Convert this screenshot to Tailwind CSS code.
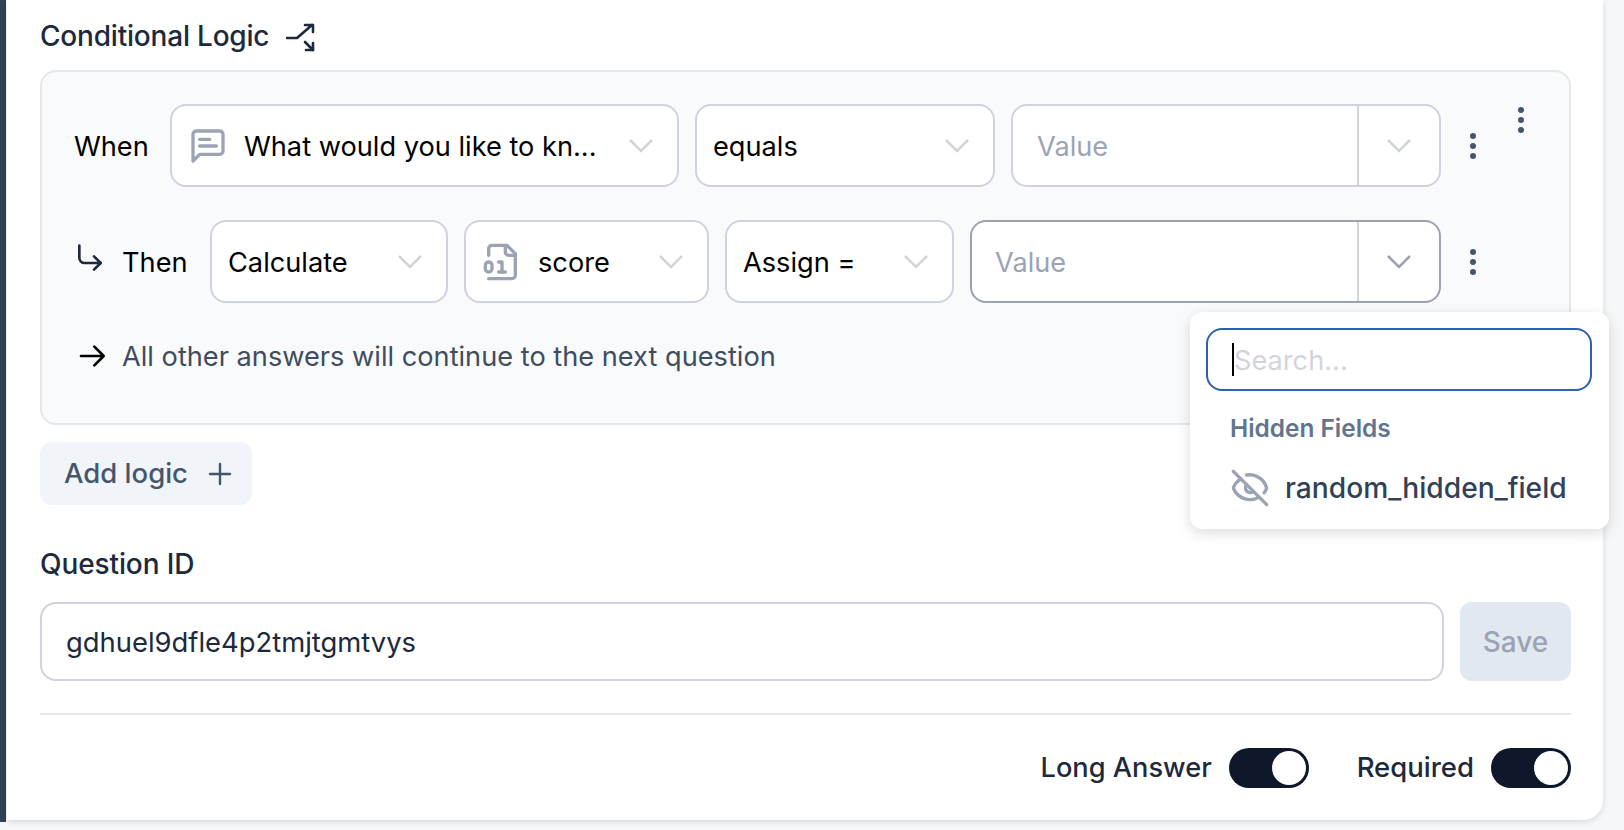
<!DOCTYPE html>
<html lang="en">
<head>
  <meta charset="UTF-8" />
  <title>Conditional Logic</title>
  <script src="https://cdn.jsdelivr.net/npm/@tailwindcss/browser@4"></script>
</head>
<body class="bg-[#e9ebee] font-['Inter',sans-serif] overflow-hidden">
  <div class="relative flex w-[1624px] h-[830px] overflow-hidden bg-[#f6f7f9]">
    <!-- Left accent -->
    <div class="w-[6px] h-[822px] bg-[#334155] shrink-0"></div>

    <!-- Card -->
    <div class="ml-px w-[1596px] h-[820px] bg-white rounded-br-[20px] shadow-[0_2px_6px_rgba(0,0,0,0.12)] pt-4 pl-[33px] pr-[32px]">
      <!-- Heading -->
      <div class="flex items-center h-10 gap-[17px] text-[28px] font-medium text-slate-800 tracking-[-0.2px]">
        <span>Conditional Logic</span>
        <svg class="mt-[4px] w-[30px] h-[30px] text-slate-800" viewBox="0 0 30 30" fill="none" stroke="currentColor" stroke-width="2.6" stroke-linecap="round" stroke-linejoin="round">
          <path d="M1 15h10l15-13" />
          <path d="M19 2h8v7" />
          <path d="M19 19l8 8" />
          <path d="M27 20v7h-7" />
        </svg>
      </div>

      <!-- Logic panel -->
      <div class="relative mt-[14px] h-[355px] bg-slate-50 border-2 border-gray-200 rounded-[16px] pt-[32px] pl-[32px]">
        <!-- When row -->
        <div class="flex items-center h-[83px] text-[27.2px] text-black">
          <span class="w-[96px] shrink-0 pt-[3px]">When</span>
          <div class="w-[509px] h-full flex items-center bg-white border-2 border-[#cfd3df] rounded-[16px] pl-[16px] pr-[24px]">
            <svg class="w-[40px] h-[40px] shrink-0 text-[#9ca3b4]" viewBox="0 0 24 24" fill="none" stroke="currentColor" stroke-width="2" stroke-linecap="round" stroke-linejoin="round">
              <path d="M21 15a2 2 0 0 1-2 2H7l-4 4V5a2 2 0 0 1 2-2h14a2 2 0 0 1 2 2z" />
              <path d="M7 8h6" />
              <path d="M7 12h10" />
            </svg>
            <span class="ml-[16px] flex-1 whitespace-nowrap pt-[3px]">What would you like to kn...</span>
            <svg class="w-[24px] h-[14px] shrink-0 text-[#d1d5db]" viewBox="0 0 24 14" fill="none" stroke="currentColor" stroke-width="2.5"><path d="M1 1l11 11L23 1" /></svg>
          </div>
          <div class="ml-[16px] w-[300px] h-full flex items-center justify-between bg-white border-2 border-[#cfd3df] rounded-[16px] pl-[16px] pr-[24px]">
            <span class="pt-[3px]">equals</span>
            <svg class="w-[24px] h-[14px] text-[#d1d5db]" viewBox="0 0 24 14" fill="none" stroke="currentColor" stroke-width="2.5"><path d="M1 1l11 11L23 1" /></svg>
          </div>
          <div class="ml-[16px] w-[430px] h-full flex items-center bg-white border-2 border-[#cfd3df] rounded-[16px]">
            <span class="flex-1 pl-[24px] pt-[3px] text-[#9ca3b4]">Value</span>
            <div class="w-[82px] h-full flex items-center justify-center border-l-2 border-[#d1d5db]">
              <svg class="w-[24px] h-[14px] text-[#d1d5db]" viewBox="0 0 24 14" fill="none" stroke="currentColor" stroke-width="2.5"><path d="M1 1l11 11L23 1" /></svg>
            </div>
          </div>
          <svg class="ml-[24px] w-[16px] h-[28px] text-slate-600" viewBox="0 0 16 28" fill="currentColor"><circle cx="8" cy="4" r="3" /><circle cx="8" cy="14" r="3" /><circle cx="8" cy="24" r="3" /></svg>
        </div>

        <!-- Then row -->
        <div class="mt-[33px] flex items-center h-[83px] text-[27.2px] text-black">
          <svg class="w-[32px] h-[32px] shrink-0 -mt-[6px] text-slate-800" viewBox="0 0 24 24" fill="none" stroke="currentColor" stroke-width="2" stroke-linecap="round" stroke-linejoin="round">
            <path d="M15 10l5 5-5 5" />
            <path d="M4 2v9a4 4 0 0 0 4 4h12" />
          </svg>
          <span class="ml-[16px] w-[88px] shrink-0 pt-[3px]">Then</span>
          <div class="w-[238px] h-full flex items-center justify-between bg-white border-2 border-[#cfd3df] rounded-[16px] pl-[16px] pr-[24px]">
            <span class="pt-[3px]">Calculate</span>
            <svg class="w-[24px] h-[14px] text-[#d1d5db]" viewBox="0 0 24 14" fill="none" stroke="currentColor" stroke-width="2.5"><path d="M1 1l11 11L23 1" /></svg>
          </div>
          <div class="ml-[16px] w-[245px] h-full flex items-center bg-white border-2 border-[#cfd3df] rounded-[16px] pl-[16px] pr-[24px]">
            <svg class="w-[40px] h-[40px] shrink-0 text-[#9ca3b4]" viewBox="0 0 24 24" fill="none" stroke="currentColor" stroke-width="2" stroke-linecap="round" stroke-linejoin="round">
              <path d="M4 22h14a2 2 0 0 0 2-2V7l-5-5H6a2 2 0 0 0-2 2v4" />
              <path d="M14 2v4a2 2 0 0 0 2 2h4" />
              <rect x="2" y="12" width="4" height="6" rx="2" />
              <path d="M10 12h2v6" />
              <path d="M10 18h4" />
            </svg>
            <span class="ml-[16px] flex-1 pt-[3px]">score</span>
            <svg class="w-[24px] h-[14px] shrink-0 text-[#d1d5db]" viewBox="0 0 24 14" fill="none" stroke="currentColor" stroke-width="2.5"><path d="M1 1l11 11L23 1" /></svg>
          </div>
          <div class="ml-[16px] w-[229px] h-full flex items-center justify-between bg-white border-2 border-[#cfd3df] rounded-[16px] pl-[16px] pr-[24px]">
            <span class="pt-[3px]">Assign =</span>
            <svg class="w-[24px] h-[14px] text-[#d1d5db]" viewBox="0 0 24 14" fill="none" stroke="currentColor" stroke-width="2.5"><path d="M1 1l11 11L23 1" /></svg>
          </div>
          <div class="ml-[16px] w-[471px] h-full flex items-center bg-white border-2 border-[#9ca3af] rounded-[16px]">
            <span class="flex-1 pl-[23px] pt-[3px] text-[#9ca3b4]">Value</span>
            <div class="w-[82px] h-full flex items-center justify-center border-l-2 border-[#d1d5db]">
              <svg class="w-[24px] h-[14px] text-[#9ca3af]" viewBox="0 0 24 14" fill="none" stroke="currentColor" stroke-width="2.5"><path d="M1 1l11 11L23 1" /></svg>
            </div>
          </div>
          <svg class="ml-[24px] w-[16px] h-[28px] text-slate-600" viewBox="0 0 16 28" fill="currentColor"><circle cx="8" cy="4" r="3" /><circle cx="8" cy="14" r="3" /><circle cx="8" cy="24" r="3" /></svg>
        </div>

        <!-- Fallback note -->
        <div class="mt-[31px] flex items-center h-[44px] text-[27.2px] text-[#414c5e]">
          <svg class="ml-[3px] w-[32px] h-[32px] shrink-0 text-black" viewBox="0 0 24 24" fill="none" stroke="currentColor" stroke-width="2" stroke-linecap="round" stroke-linejoin="round">
            <path d="M3 12h16" />
            <path d="M13 5l7 7-7 7" />
          </svg>
          <span class="ml-[13px] pt-[2px]">All other answers will continue to the next question</span>
        </div>

        <!-- Stray menu button -->
        <svg class="absolute left-[1471px] top-[34px] w-[16px] h-[28px] text-slate-600" viewBox="0 0 16 28" fill="currentColor"><circle cx="8" cy="4" r="3" /><circle cx="8" cy="14" r="3" /><circle cx="8" cy="24" r="3" /></svg>
      </div>

      <!-- Add logic -->
      <div class="mt-[17px] w-[212px] h-[63px] flex items-center gap-[20px] pl-[24px] bg-slate-100 rounded-[12px] text-[27.5px] font-medium text-slate-600">
        <span>Add logic</span>
        <svg class="w-[24px] h-[24px]" viewBox="0 0 24 24" fill="none" stroke="currentColor" stroke-width="2.4" stroke-linecap="round"><path d="M12 2v20" /><path d="M2 12h20" /></svg>
      </div>

      <!-- Question ID -->
      <div class="mt-[39px] h-10 flex items-center text-[28px] font-medium text-slate-800 tracking-[-0.1px]">Question ID</div>
      <div class="mt-[18px] flex gap-[16px] h-[79px]">
        <div class="flex-1 flex items-center pl-[24px] bg-white border-2 border-[#cfd3df] rounded-[16px] text-[27.4px] text-slate-800">
          <span class="pt-[2px]">gdhuel9dfle4p2tmjtgmtvys</span>
        </div>
        <div class="w-[111px] flex items-center justify-center bg-slate-200 rounded-[12px] text-[28px] font-medium text-[#9ca3b4]">Save</div>
      </div>

      <div class="mt-[32px] h-[2px] bg-gray-200"></div>

      <!-- Toggles -->
      <div class="mt-[33px] flex items-center justify-end h-10 text-[27.2px] font-medium text-slate-800">
        <span>Long Answer</span>
        <div class="ml-[17px] w-[80px] h-10 flex items-center justify-end pr-[3px] bg-slate-900 rounded-full">
          <div class="w-[34px] h-[34px] bg-white rounded-full"></div>
        </div>
        <span class="ml-[48px] text-[27.5px]">Required</span>
        <div class="ml-[17px] w-[80px] h-10 flex items-center justify-end pr-[3px] bg-slate-900 rounded-full">
          <div class="w-[34px] h-[34px] bg-white rounded-full"></div>
        </div>
      </div>
    </div>

    <!-- Dropdown popup -->
    <div class="absolute left-[1190px] top-[312px] w-[419px] h-[217px] bg-white rounded-[12px] shadow-[0_4px_14px_rgba(0,0,0,0.14)] pt-[16px] pl-[16px] pr-[17px]">
      <div class="h-[63px] flex items-center pl-[24px] border-2 border-[#2f5fb3] rounded-[16px] text-[27.2px] text-[#d1d5db]">
        <span class="w-[2px] h-[33px] bg-black"></span>
        <span class="pt-[4px]">Search...</span>
      </div>
      <div class="mt-[21px] pl-[24px] text-[24.4px] leading-[32px] font-semibold text-slate-500">Hidden Fields</div>
      <div class="mt-[23px] flex items-center pl-[24px] text-[28.2px] font-medium text-slate-700">
        <svg class="w-[40px] h-[40px] shrink-0 text-[#9ca3b4]" viewBox="0 0 24 24" fill="none" stroke="currentColor" stroke-width="2" stroke-linecap="round" stroke-linejoin="round">
          <path d="M9.9 4.2A10.7 10.7 0 0 1 21.9 11.7a1 1 0 0 1 0 .7 10.7 10.7 0 0 1-1.4 2.5" />
          <path d="M14.1 14.2a3 3 0 0 1-4.2-4.2" />
          <path d="M17.5 17.5a10.8 10.8 0 0 1-15.4-5.2 1 1 0 0 1 0-.7 10.8 10.8 0 0 1 4.4-5.1" />
          <path d="M2 2l20 20" />
        </svg>
        <span class="ml-[15px] whitespace-nowrap">random_hidden_field</span>
      </div>
    </div>
  </div>
</body>
</html>
